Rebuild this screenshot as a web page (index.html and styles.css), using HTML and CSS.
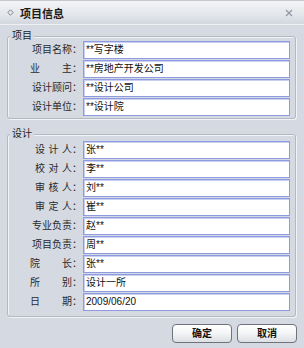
FILE: index.html
```html
<!DOCTYPE html>
<html>
<head>
<meta charset="utf-8">
<link rel="stylesheet" href="styles.css">
</head>
<body>
<div class="window">
  <div class="titlebar">
    <svg class="ticon" width="7" height="7" viewBox="0 0 7 7"><path d="M3.5 0.8 L6.2 3.5 L3.5 6.2 L0.8 3.5 Z" fill="none" stroke="#7d838e" stroke-width="1"/></svg>
    <span class="title">项目信息</span>
    <svg class="close" width="8" height="8" viewBox="0 0 8 8"><path d="M1 1 L7 7 M7 1 L1 7" stroke="#9097a2" stroke-width="1.2"/></svg>
  </div>
  <fieldset class="group g1">
    <legend>项目</legend>
    <div class="rows">
      <label class="lbl">项目名称：</label><div class="inp">**写字楼</div>
      <label class="lbl"><span class="w2">业</span>主：</label><div class="inp">**房地产开发公司</div>
      <label class="lbl">设计顾问：</label><div class="inp">**设计公司</div>
      <label class="lbl">设计单位：</label><div class="inp">**设计院</div>
    </div>
  </fieldset>
  <fieldset class="group g2">
    <legend>设计</legend>
    <div class="rows">
      <label class="lbl"><span class="w1">设计</span>人：</label><div class="inp">张**</div>
      <label class="lbl"><span class="w1">校对</span>人：</label><div class="inp">李**</div>
      <label class="lbl"><span class="w1">审核</span>人：</label><div class="inp">刘**</div>
      <label class="lbl"><span class="w1">审定</span>人：</label><div class="inp">崔**</div>
      <label class="lbl">专业负责：</label><div class="inp">赵**</div>
      <label class="lbl">项目负责：</label><div class="inp">周**</div>
      <label class="lbl"><span class="w2">院</span>长：</label><div class="inp">张**</div>
      <label class="lbl"><span class="w2">所</span>别：</label><div class="inp">设计一所</div>
      <label class="lbl"><span class="w2">日</span>期：</label><div class="inp">2009/06/20</div>
    </div>
  </fieldset>
  <div class="buttons">
    <button class="btn">确定</button>
    <button class="btn">取消</button>
  </div>
</div>
</body>
</html>
```
FILE: styles.css
```css
html, body {
  margin: 0;
  padding: 0;
  background: #d5d9e1;
}
.window {
  width: 304px;
  height: 348px;
  background: #d5d9e1;
  font-family: "Liberation Sans", "Noto Sans CJK SC", sans-serif;
  font-size: 10px;
  color: #222;
  display: flex;
  flex-direction: column;
  overflow: hidden;
}
.titlebar {
  height: 24px;
  flex: none;
  display: flex;
  align-items: center;
  background: linear-gradient(#f3f4f6, #e3e6ea 60%, #d3d7de);
  border-bottom: 1px solid #eef0f3;
  border-top: 1px solid #c4c8cf;
  box-sizing: border-box;
  height: 25px;
  padding-left: 7px;
  padding-right: 11px;
}
.ticon {
  display: block;
}
.title {
  font-weight: bold;
  font-size: 11px;
  margin-left: 6px;
  color: #1a1a1a;
  flex: 1;
}
.close {
  display: block;
}
.group {
  margin: 6px 8px 0 7px;
  padding: 0 5px 2px 0;
  border: 1px solid #b3b9c3;
  border-radius: 3px;
  box-shadow: inset 1px 1px 0 #f1f3f6, 1px 1px 0 #f1f3f6;
  min-width: 0;
}
.group legend {
  font-size: 10px;
  line-height: 10px;
  padding: 0 2px;
  margin-left: 2px;
  background: #d5d9e1;
  color: #222;
}
.g2 {
  margin-top: 10px;
  padding-top: 2px;
  padding-bottom: 5px;
}
.rows {
  display: grid;
  grid-template-columns: 74px 1fr;
  column-gap: 1px;
  row-gap: 1px;
}
.lbl {
  text-align: right;
  line-height: 18px;
  white-space: nowrap;
  color: #2a2a2a;
}
.w1 {
  letter-spacing: 3.5px;
}
.w2 {
  letter-spacing: 22px;
}
.inp {
  height: 18px;
  box-sizing: border-box;
  border: 1px solid #8f9be0;
  box-shadow: inset 1px 1px 0 #c9cff2;
  background: #fff;
  line-height: 16px;
  padding-left: 2px;
  color: #111;
}
.buttons {
  display: flex;
  justify-content: flex-end;
  gap: 5px;
  padding: 7px 7px 0 0;
}
.btn {
  width: 60px;
  height: 19px;
  border: 1px solid #6f747c;
  border-radius: 4px;
  background: linear-gradient(#ffffff, #f3f4f6 50%, #dcdfe4);
  font-family: "Liberation Sans", "Noto Sans CJK SC", sans-serif;
  font-size: 10px;
  font-weight: bold;
  color: #111;
  padding: 0;
  line-height: 17px;
}
```
